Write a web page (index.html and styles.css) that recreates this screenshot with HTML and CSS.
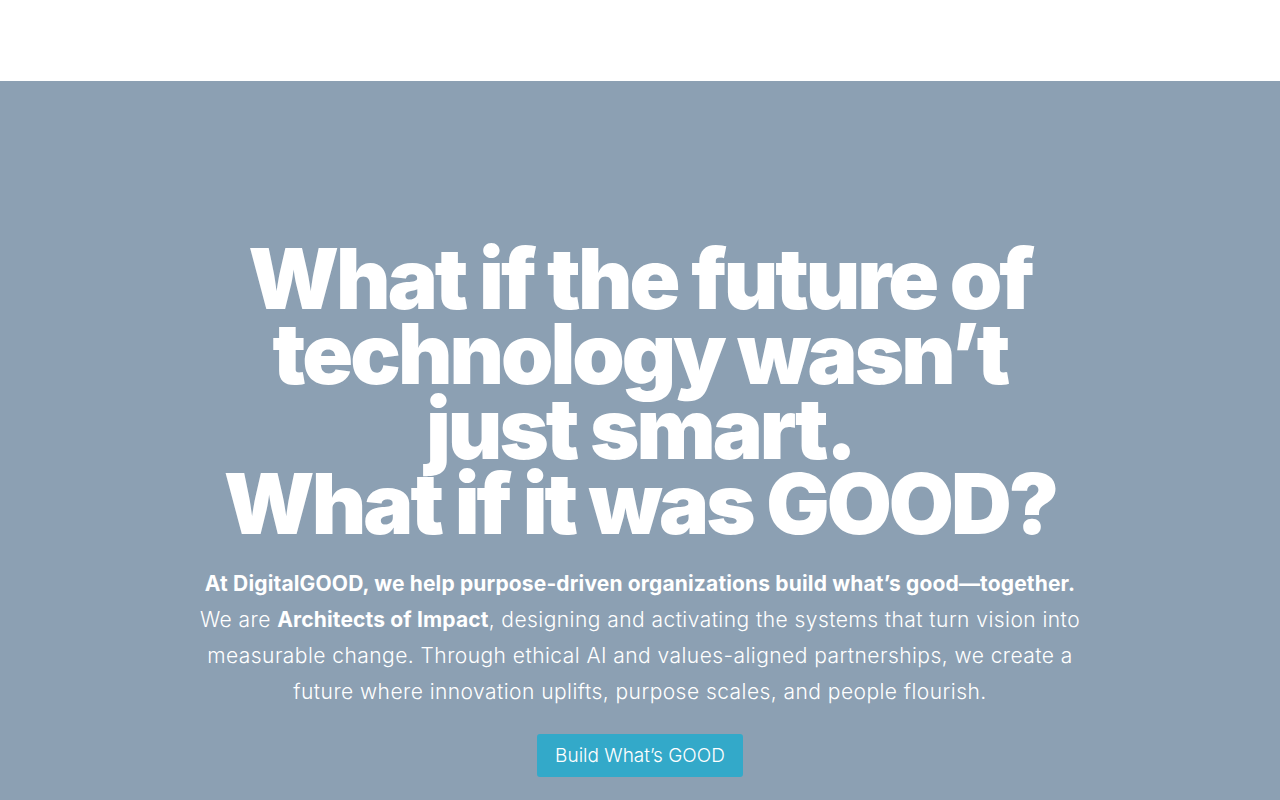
FILE: index.html
```html
<!DOCTYPE html>
<html lang="en">
<head>
    <meta charset="UTF-8">
    <meta name="viewport" content="width=device-width, initial-scale=1.0">
    <title>DigitalGOOD</title>
    <link rel="stylesheet" href="styles.css">
</head>
<body>
    <header class="site-header"></header>
    <section class="hero">
        <div class="hero-inner">
            <h1 class="hero-title">What if the future of technology wasn’t just smart.<br>What if it was GOOD?</h1>
            <p class="hero-text"><strong>At DigitalGOOD, we help purpose-driven organizations build what’s good—together.</strong><br>We are <strong>Architects of Impact</strong>, designing and activating the systems that turn vision into measurable change. Through ethical AI and values-aligned partnerships, we create a future where innovation uplifts, purpose scales, and people flourish.</p>
            <a class="btn" href="#">Build What’s GOOD</a>
        </div>
    </section>
</body>
</html>
```

FILE: styles.css
```css
body {
    margin: 0;
    font-family: Inter, "Open Sans", sans-serif;
    color: #fff;
}
.site-header {
    height: 81px;
    background-color: #fff;
}
.hero {
    background-color: #8ca0b3;
    min-height: 719px;
    padding-top: 160px;
    box-sizing: border-box;
}
.hero-inner {
    width: 900px;
    margin: 0 auto;
    text-align: center;
}
.hero-title {
    max-width: 860px;
    margin: 0 auto;
    font-size: 84px;
    font-weight: 900;
    line-height: 75px;
    letter-spacing: -3px;
}
.hero-text {
    margin: 25px 0 24px;
    font-size: 21px;
    font-weight: 300;
    line-height: 36px;
    letter-spacing: 0.45px;
}
.hero-text strong {
    font-weight: 700;
    letter-spacing: 0.15px;
}
.btn {
    display: inline-block;
    padding: 0 18px;
    height: 43px;
    line-height: 43px;
    border-radius: 3px;
    background-color: #33a9c9;
    color: #fff;
    font-size: 19px;
    font-weight: 300;
    text-decoration: none;
}
```
